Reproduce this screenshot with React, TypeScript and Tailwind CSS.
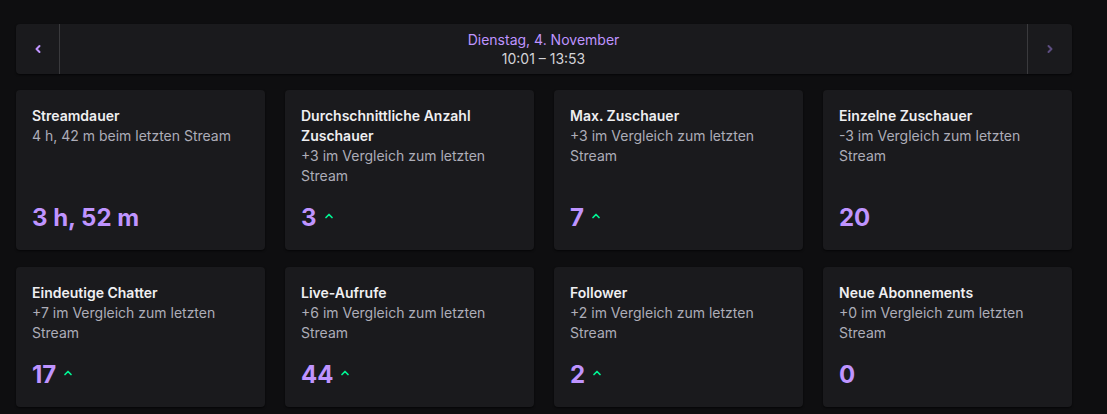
import { ChevronLeft, ChevronRight, ChevronUp } from "lucide-react";

type Stat = {
  title: string;
  sub: string;
  value: string;
  up?: boolean;
};

const stats: Stat[] = [
  { title: "Streamdauer", sub: "4 h, 42 m beim letzten Stream", value: "3 h, 52 m" },
  { title: "Durchschnittliche Anzahl Zuschauer", sub: "+3 im Vergleich zum letzten Stream", value: "3", up: true },
  { title: "Max. Zuschauer", sub: "+3 im Vergleich zum letzten Stream", value: "7", up: true },
  { title: "Einzelne Zuschauer", sub: "-3 im Vergleich zum letzten Stream", value: "20" },
  { title: "Eindeutige Chatter", sub: "+7 im Vergleich zum letzten Stream", value: "17", up: true },
  { title: "Live-Aufrufe", sub: "+6 im Vergleich zum letzten Stream", value: "44", up: true },
  { title: "Follower", sub: "+2 im Vergleich zum letzten Stream", value: "2", up: true },
  { title: "Neue Abonnements", sub: "+0 im Vergleich zum letzten Stream", value: "0" },
];

function StatCard({ stat }: { stat: Stat }) {
  return (
    <div className="flex flex-col justify-between rounded bg-[#1a1a1d] p-4 shadow-[0_1px_2px_rgba(0,0,0,0.6)]">
      <div className="text-sm leading-5">
        <div className="font-semibold text-[#efeff1]">{stat.title}</div>
        <div className="text-[#adadb8]">{stat.sub}</div>
      </div>
      <div className="mt-4 flex h-8 items-center gap-1.5">
        <span className="text-[24px] font-bold leading-8 text-[#bf94ff]">{stat.value}</span>
        {stat.up && <ChevronUp className="mb-1 h-3 w-3 text-[#00f593]" strokeWidth={3.5} />}
      </div>
    </div>
  );
}

export default function App() {
  return (
    <div className="min-h-[414px] bg-[#0e0e10] px-4 pt-6 font-['Inter',sans-serif]">
      <div className="flex h-[50px] w-[1056px] rounded-sm bg-[#1a1a1d] shadow-[0_1px_2px_rgba(0,0,0,0.6)]">
        <button className="flex w-[44px] items-center justify-center border-r border-[#3a3a3d]">
          <ChevronLeft className="h-3 w-3 text-[#bf94ff]" strokeWidth={4} />
        </button>
        <div className="flex flex-1 flex-col items-center justify-center text-sm leading-[19px]">
          <span className="text-[#bf94ff]">Dienstag, 4. November</span>
          <span className="text-[#d3d3d8]">10:01 – 13:53</span>
        </div>
        <button className="flex w-[45px] items-center justify-center border-l border-[#3a3a3d]">
          <ChevronRight className="h-3 w-3 text-[#5c4d80]" strokeWidth={4} />
        </button>
      </div>
      <div className="mt-4 grid w-[1056px] grid-cols-4 gap-x-5 gap-y-[17px]">
        {stats.map((s) => (
          <StatCard key={s.title} stat={s} />
        ))}
      </div>
    </div>
  );
}
